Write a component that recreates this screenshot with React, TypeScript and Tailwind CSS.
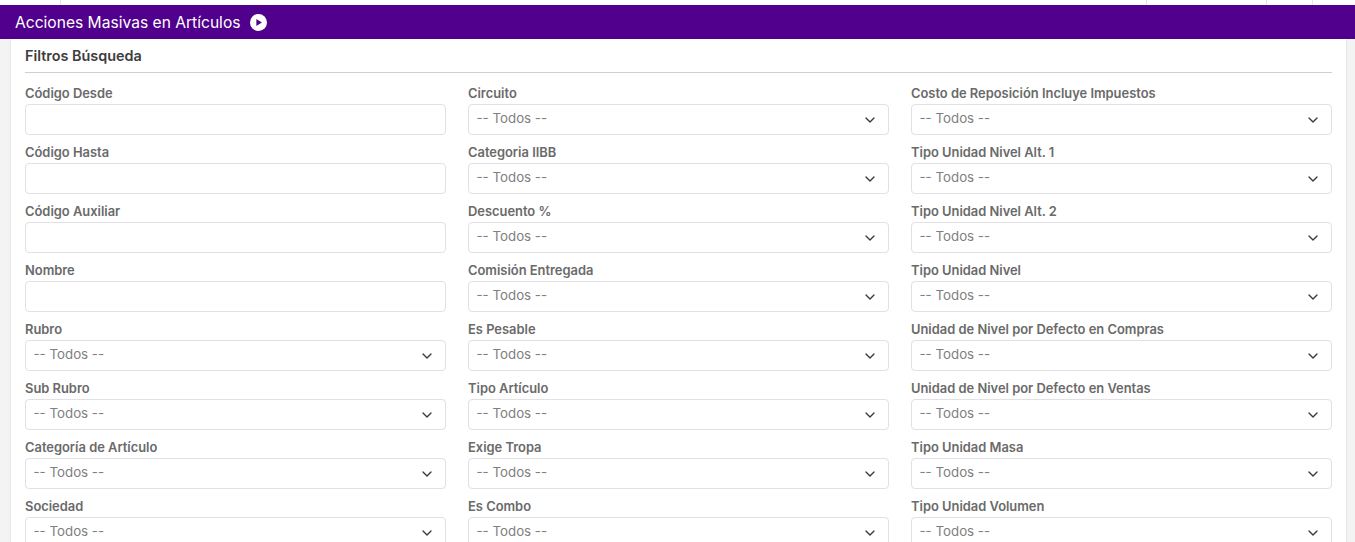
import React from 'react';
import { ChevronDown } from 'lucide-react';

type Field = { label: string; select?: boolean };

const columns: Field[][] = [
  [
    { label: 'Código Desde' },
    { label: 'Código Hasta' },
    { label: 'Código Auxiliar' },
    { label: 'Nombre' },
    { label: 'Rubro', select: true },
    { label: 'Sub Rubro', select: true },
    { label: 'Categoría de Artículo', select: true },
    { label: 'Sociedad', select: true },
  ],
  [
    { label: 'Circuito', select: true },
    { label: 'Categoria IIBB', select: true },
    { label: 'Descuento %', select: true },
    { label: 'Comisión Entregada', select: true },
    { label: 'Es Pesable', select: true },
    { label: 'Tipo Artículo', select: true },
    { label: 'Exige Tropa', select: true },
    { label: 'Es Combo', select: true },
  ],
  [
    { label: 'Costo de Reposición Incluye Impuestos', select: true },
    { label: 'Tipo Unidad Nivel Alt. 1', select: true },
    { label: 'Tipo Unidad Nivel Alt. 2', select: true },
    { label: 'Tipo Unidad Nivel', select: true },
    { label: 'Unidad de Nivel por Defecto en Compras', select: true },
    { label: 'Unidad de Nivel por Defecto en Ventas', select: true },
    { label: 'Tipo Unidad Masa', select: true },
    { label: 'Tipo Unidad Volumen', select: true },
  ],
];

const FormField = ({ label, select }: Field) => (
  <div className="h-[59px]">
    <label className="block h-[21px] text-[12.9px] leading-[22px] font-semibold text-[#6a6a6a]">{label}</label>
    {select ? (
      <div className="h-[31px] flex items-center justify-between pl-[7.5px] pr-[10px] bg-white border border-[#e0e0e6] rounded-[4px]">
        <span className="-mt-[1px] text-[13.3px] text-[#808080]">-- Todos --</span>
        <ChevronDown className="w-[16px] h-[16px] text-[#343a40]" strokeWidth={2} />
      </div>
    ) : (
      <input type="text" className="block w-full h-[31px] bg-white border border-[#e0e0e6] rounded-[4px]" />
    )}
  </div>
);

export default function App() {
  return (
    <div className="h-[542px] overflow-hidden bg-[#f3f3f3] font-['Inter','Liberation_Sans',sans-serif]">
      {/* strip of the page behind the header */}
      <div className="h-[5px] bg-white flex">
        <div className="w-[61px] border-r border-[#e6e6e6]" />
        <div className="w-[1086px] border-r border-[#e6e6e6]" />
        <div className="w-[120px] border-r border-[#e6e6e6]" />
        <div className="w-[46px] border-r border-[#e6e6e6]" />
      </div>

      <div className="h-[34px] bg-[#50008c] flex items-center gap-[10px] pl-[15px]">
        <span className="pt-[1px] text-[15.6px] text-white">Acciones Masivas en Artículos</span>
        <svg viewBox="0 0 16 16" className="w-[17px] h-[17px]">
          <circle cx="8" cy="8" r="8" fill="#fff" />
          <path d="M6 4.8v6.4L11.2 8z" fill="#50008c" />
        </svg>
      </div>

      <div className="ml-[11px] mr-[9px] bg-white px-[14px] shadow-[0_0_2px_rgba(0,0,0,0.12)]">
        <div className="h-[34px] flex items-center border-b border-[#cfcfcf] mb-[10px]">
          <h2 className="text-[14.4px] font-semibold text-[#3d3d3d]">Filtros Búsqueda</h2>
        </div>
        <div className="grid grid-cols-3 gap-x-[22px]">
          {columns.map((fields, i) => (
            <div key={i}>
              {fields.map((f) => (
                <FormField key={f.label} {...f} />
              ))}
            </div>
          ))}
        </div>
      </div>
    </div>
  );
}
